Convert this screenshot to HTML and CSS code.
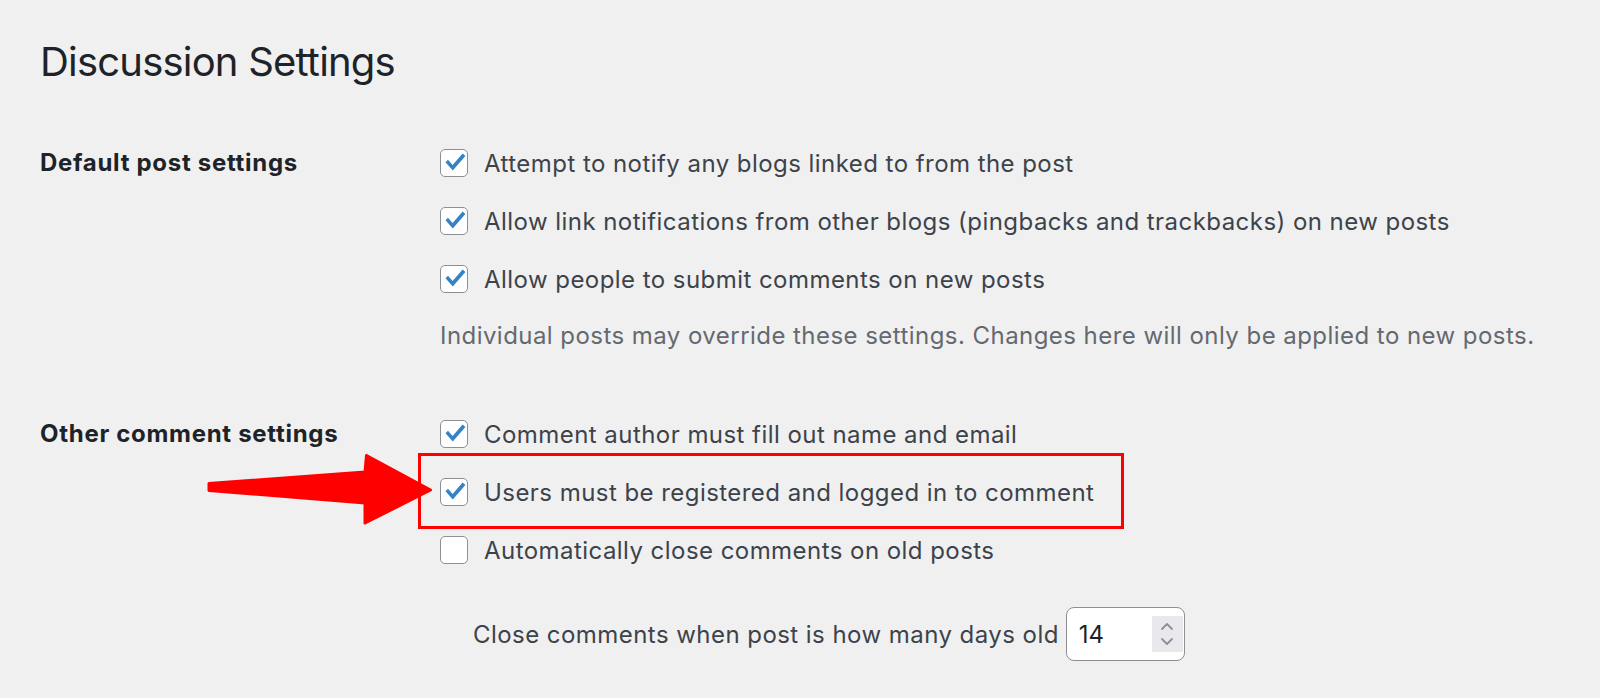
FILE: index.html
```html
<!DOCTYPE html>
<html lang="en">
<head>
  <meta charset="UTF-8">
  <meta name="viewport" content="width=device-width, initial-scale=1.0">
  <title>Discussion Settings</title>
  <link rel="stylesheet" href="styles.css">
</head>
<body>
  <div class="wrap">
    <h1 class="title">Discussion Settings</h1>

    <div class="section first">
      <div class="section-label">Default post settings</div>
      <div class="options">
        <label class="option">
          <span class="box"><svg viewBox="0 0 28 28"><polygon points="5.5,13.2 8,10.8 12.6,16 22.6,4.4 25.4,6.9 12.8,21.4"/></svg></span>
          Attempt to notify any blogs linked to from the post
        </label>
        <label class="option">
          <span class="box"><svg viewBox="0 0 28 28"><polygon points="5.5,13.2 8,10.8 12.6,16 22.6,4.4 25.4,6.9 12.8,21.4"/></svg></span>
          Allow link notifications from other blogs (pingbacks and trackbacks) on new posts
        </label>
        <label class="option">
          <span class="box"><svg viewBox="0 0 28 28"><polygon points="5.5,13.2 8,10.8 12.6,16 22.6,4.4 25.4,6.9 12.8,21.4"/></svg></span>
          Allow people to submit comments on new posts
        </label>
        <p class="description">Individual posts may override these settings. Changes here will only be applied to new posts.</p>
      </div>
    </div>

    <div class="section second">
      <div class="section-label">Other comment settings</div>
      <div class="options">
        <label class="option">
          <span class="box"><svg viewBox="0 0 28 28"><polygon points="5.5,13.2 8,10.8 12.6,16 22.6,4.4 25.4,6.9 12.8,21.4"/></svg></span>
          Comment author must fill out name and email
        </label>
        <label class="option">
          <span class="box"><svg viewBox="0 0 28 28"><polygon points="5.5,13.2 8,10.8 12.6,16 22.6,4.4 25.4,6.9 12.8,21.4"/></svg></span>
          Users must be registered and logged in to comment
        </label>
        <label class="option">
          <span class="box"></span>
          Automatically close comments on old posts
        </label>
        <div class="close-row">
          <span>Close comments when post is how many days old</span>
          <div class="number">
            <span class="number-value">14</span>
            <span class="spin">
              <svg viewBox="0 0 16 34"><path d="M3 12 L8 7 L13 12 M3 22 L8 27 L13 22"/></svg>
            </span>
          </div>
        </div>
      </div>
    </div>
  </div>

  <!-- annotation drawn over the screenshot -->
  <svg class="annotation" viewBox="0 0 1600 698">
    <rect class="highlight" x="419.5" y="454.5" width="703" height="73"/>
    <polygon class="arrow" points="209,483.5 365,472 366.5,455.5 430.5,490 365,523 365,503 209,490.5"/>
  </svg>
</body>
</html>
```

FILE: styles.css
```css
body {
  margin: 0;
  background-color: #f0f0f1;
  font-family: Inter, "Open Sans", Arial, sans-serif;
  color: #3c434a;
}
.wrap {
  padding: 38px 0 0 40px;
}
.title {
  margin: 0;
  font-size: 40px;
  line-height: 48px;
  font-weight: 400;
  color: #1d2327;
  letter-spacing: -0.8px;
}
.section {
  display: flex;
}
.section.first {
  margin-top: 48px;
}
.section.second {
  margin-top: 41px;
}
.section-label {
  width: 400px;
  flex-shrink: 0;
  font-size: 24px;
  font-weight: 700;
  letter-spacing: 0.7px;
  color: #1d2327;
  line-height: 58px;
}
.options {
  display: flex;
  flex-direction: column;
}
.option {
  display: flex;
  align-items: center;
  gap: 16px;
  height: 58px;
  font-size: 24px;
  letter-spacing: 0.45px;
}
.box {
  width: 28px;
  height: 28px;
  box-sizing: border-box;
  border: 1.5px solid #8c8f94;
  border-radius: 5px;
  background: #fff;
  flex-shrink: 0;
  position: relative;
}
.box svg {
  position: absolute;
  left: -1.5px;
  top: -1.5px;
  width: 28px;
  height: 28px;
  fill: #3582c4;
}
.description {
  margin: 0;
  font-size: 24px;
  letter-spacing: 0.45px;
  line-height: 56px;
  color: #646970;
}
.close-row {
  display: flex;
  align-items: center;
  gap: 7px;
  margin-top: 28px;
  padding-left: 33px;
  font-size: 24px;
  letter-spacing: 0.45px;
}
.number {
  width: 119px;
  height: 54px;
  box-sizing: border-box;
  border: 1.5px solid #8c8f94;
  border-radius: 8px;
  background: #fff;
  display: flex;
  align-items: center;
  justify-content: space-between;
  padding: 0 1px 0 12px;
}
.number-value {
  color: #1d2327;
  font-size: 24px;
  letter-spacing: 0;
}
.spin {
  width: 31px;
  height: 36px;
  background: #e9e9ed;
  display: flex;
  align-items: center;
  justify-content: center;
}
.spin svg {
  width: 16px;
  height: 34px;
  fill: none;
  stroke: #8c8f94;
  stroke-width: 1.8;
  stroke-linecap: round;
  stroke-linejoin: round;
}
.annotation {
  position: absolute;
  left: 0;
  top: 0;
  width: 1600px;
  height: 698px;
  pointer-events: none;
}
.highlight {
  fill: none;
  stroke: #ff0000;
  stroke-width: 3;
}
.arrow {
  fill: #ff0000;
  stroke: #ff0000;
  stroke-width: 3;
  stroke-linejoin: round;
}
```
